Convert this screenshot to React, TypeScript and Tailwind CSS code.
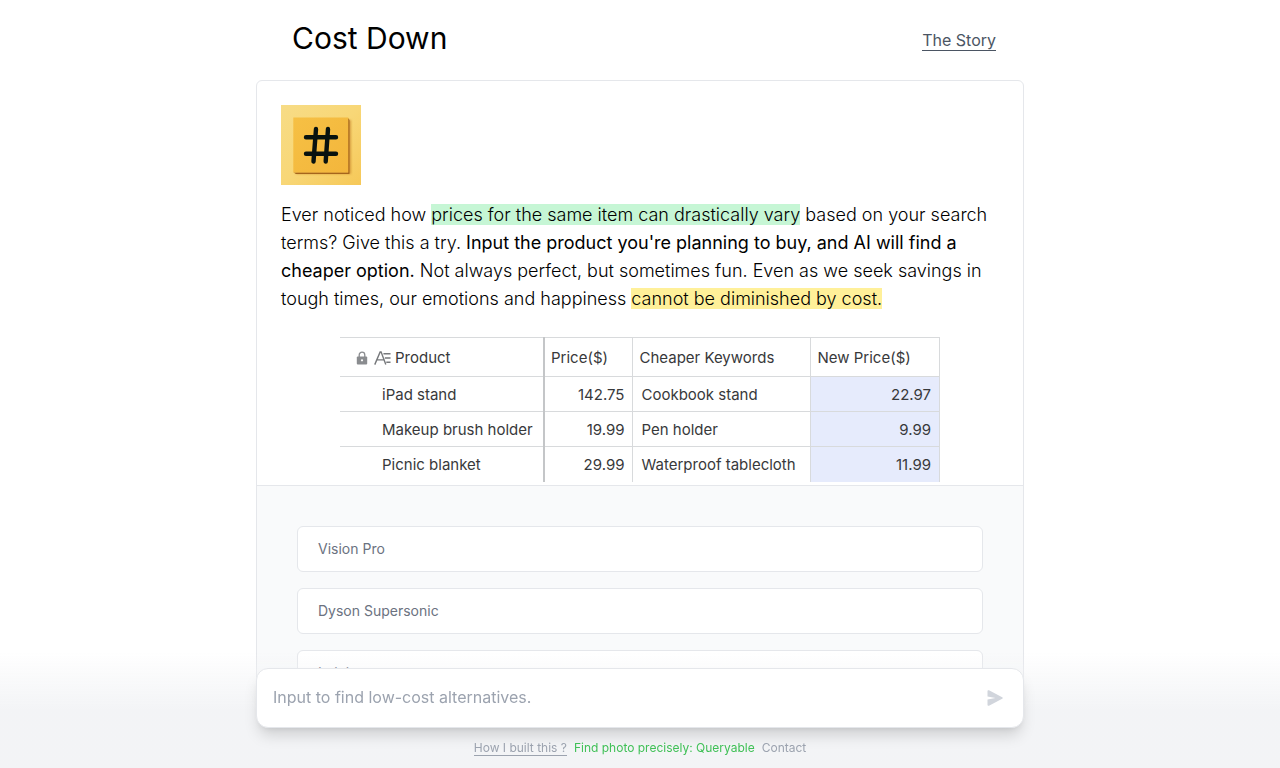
import { useState } from 'react';

interface Comparison {
  product: string;
  price: string;
  keywords: string;
  newPrice: string;
}

const comparisons: Comparison[] = [
  { product: 'iPad stand', price: '142.75', keywords: 'Cookbook stand', newPrice: '22.97' },
  { product: 'Makeup brush holder', price: '19.99', keywords: 'Pen holder', newPrice: '9.99' },
  { product: 'Picnic blanket', price: '29.99', keywords: 'Waterproof tablecloth', newPrice: '11.99' },
];

const examples = ['Vision Pro', 'Dyson Supersonic', 'Lululemon'];

function Logo() {
  return (
    <svg viewBox="0 0 80 80" className="size-20" role="img" aria-label="Cost Down logo">
      <defs>
        <linearGradient id="wall" x1="0" y1="0" x2="1" y2="1">
          <stop offset="0" stopColor="#f7dc86" />
          <stop offset="0.5" stopColor="#f8d777" />
          <stop offset="1" stopColor="#f6c858" />
        </linearGradient>
        <linearGradient id="tile" x1="0" y1="0" x2="1" y2="1">
          <stop offset="0" stopColor="#f6c044" />
          <stop offset="1" stopColor="#f3b63c" />
        </linearGradient>
        <filter id="soft" x="-20%" y="-20%" width="140%" height="140%">
          <feGaussianBlur stdDeviation="1.3" />
        </filter>
      </defs>
      <rect width="80" height="80" fill="url(#wall)" />
      <rect x="15" y="15" width="55" height="54" fill="#c07a20" opacity="0.6" filter="url(#soft)" />
      <path d="M67 13 L68.500 15 V69 H15 L12.500 67.500 H67 Z" fill="#a5651c" />
      <rect x="12.300" y="12.500" width="55" height="55" fill="url(#tile)" />
      <path
        d="M25 32.200 H55 M25 48.700 H55 M35 24 L32.500 56.500 M47 24 L44.700 56.500"
        stroke="#08120f"
        strokeWidth="4.400"
        strokeLinecap="round"
        fill="none"
      />
    </svg>
  );
}

function PriceTable() {
  return (
    <table className="mx-auto w-full max-w-[600px] table-fixed border-collapse border-t border-r border-[#d8dadc] text-[15px] text-[#38393b]">
      <colgroup>
        <col className="w-[204px]" />
        <col className="w-[88px]" />
        <col className="w-[178px]" />
        <col />
      </colgroup>
      <thead>
        <tr className="h-[39px] border-b border-[#d8dadc] text-left">
          <th className="border-r-2 border-[#c4c6c8] pt-0.5 pl-4 font-normal">
            <span className="flex items-center">
              <svg viewBox="0 0 12 14" className="mr-1.5 h-3.5 w-3" aria-hidden="true">
                <path d="M3.200 6 V4 a2.800 2.800 0 0 1 5.600 0 V6" fill="none" stroke="#8a8c8f" strokeWidth="1.300" />
                <rect x="0.800" y="5.500" width="10.400" height="8" rx="1" fill="#8a8c8f" />
                <circle cx="6" cy="9.300" r="1.100" fill="#fff" />
              </svg>
              <svg
                viewBox="0 0 18 16"
                className="mr-1 h-4 w-[17px]"
                fill="none"
                stroke="#77797c"
                strokeWidth="1.500"
                aria-hidden="true"
              >
                <path d="M0.800 15 L6.500 1.500 H7.500 L12.500 15 M3 10 H10.500 M10 3.500 H17.500 M11.500 8 H17.500 M13 12.500 H17.500" />
              </svg>
              Product
            </span>
          </th>
          <th className="border-r border-[#d8dadc] pt-0.5 pl-1.5 font-normal">Price($)</th>
          <th className="border-r border-[#d8dadc] pt-0.5 pl-[7px] font-normal">Cheaper Keywords</th>
          <th className="pt-0.5 pl-[7px] font-normal">New Price($)</th>
        </tr>
      </thead>
      <tbody>
        {comparisons.map((row) => (
          <tr key={row.product} className="h-[35px] border-b border-[#d8dadc] last:border-b-0">
            <td className="border-r-2 border-[#c4c6c8] pt-0.5 pl-[42px] whitespace-nowrap">{row.product}</td>
            <td className="border-r border-[#d8dadc] pt-0.5 pr-[7px] text-right">{row.price}</td>
            <td className="border-r border-[#d8dadc] pt-0.5 pl-[9px] whitespace-nowrap">{row.keywords}</td>
            <td className="bg-[#e6ebfc] pt-0.5 pr-2 text-right">{row.newPrice}</td>
          </tr>
        ))}
      </tbody>
    </table>
  );
}

export default function App() {
  const [input, setInput] = useState('');

  return (
    <main className="flex flex-col items-center bg-white pb-40 font-['Inter',sans-serif] text-black">
      <header className="flex w-full max-w-3xl items-end justify-between px-9 pt-5 pb-6 sm:pr-7">
        <h1 className="text-3xl">Cost Down</h1>
        <a href="#story" className="mb-[5px] border-b border-[#4b5563] leading-5 text-[#4b5563]">
          The Story
        </a>
      </header>

      <div className="w-full max-w-3xl rounded-md border border-gray-200">
        <section className="px-6 pt-6 pb-[3px]">
          <Logo />
          <p className="mt-4 mb-6 text-lg font-light">
            Ever noticed how <span className="bg-[#c6f6d5]">prices for the same item can drastically vary</span> based on
            your search terms? Give this a try.{' '}
            <strong className="font-normal">
              Input the product you're planning to buy, and AI will find a cheaper option.
            </strong>{' '}
            Not always perfect, but sometimes fun. Even as we seek savings in tough times, our emotions and happiness{' '}
            <span className="bg-[#fff099]">cannot be diminished by cost.</span>
          </p>
          <PriceTable />
        </section>

        <section className="flex flex-col gap-4 rounded-b-md border-t border-gray-200 bg-gray-50 p-10">
          {examples.map((example) => (
            <button
              key={example}
              type="button"
              className="rounded-md border border-gray-200 bg-white px-5 py-3 text-left text-sm text-[#6b7280]"
              onClick={() => setInput(example)}
            >
              {example}
            </button>
          ))}
        </section>
      </div>

      {/* Search bar */}
      <div className="fixed inset-x-0 bottom-0 flex flex-col items-center gap-3 bg-linear-to-b from-transparent via-gray-100 to-gray-100 pt-4 pb-3">
        <form
          className="flex w-full max-w-3xl items-center rounded-xl border border-gray-200 bg-white px-4 pt-4 pb-[18px] shadow-[0_10px_15px_-3px_rgba(0,0,0,0.15),0_4px_6px_-4px_rgba(0,0,0,0.1)]"
          onSubmit={(e) => e.preventDefault()}
        >
          <input
            type="text"
            aria-label="Product"
            placeholder="Input to find low-cost alternatives."
            value={input}
            onChange={(e) => setInput(e.target.value)}
            className="min-w-0 flex-1 leading-6 outline-none placeholder:text-[#9ca3af]"
          />
          <button type="submit" aria-label="Send" className="mt-0.5 mr-1">
            <svg viewBox="0 0 16 16" className="size-4 text-gray-300" fill="currentColor" aria-hidden="true">
              <path d="M0.500 1.200 C0.500 0.300 1.300 -0.100 2 0.300 L15.200 7.200 C15.900 7.600 15.900 8.400 15.200 8.800 L2 15.700 C1.300 16.100 0.500 15.700 0.500 14.800 V9.400 L8.500 8 L0.500 6.600 Z" />
            </svg>
          </button>
        </form>
        <footer className="flex gap-[7px] text-xs text-[#9ca3af]">
          <a href="#built" className="self-start border-b border-[#9ca3af] leading-[15px]">
            How I built this ?
          </a>
          <a href="#queryable" className="text-[#40c057]">
            Find photo precisely: Queryable
          </a>
          <a href="#contact">Contact</a>
        </footer>
      </div>
    </main>
  );
}
